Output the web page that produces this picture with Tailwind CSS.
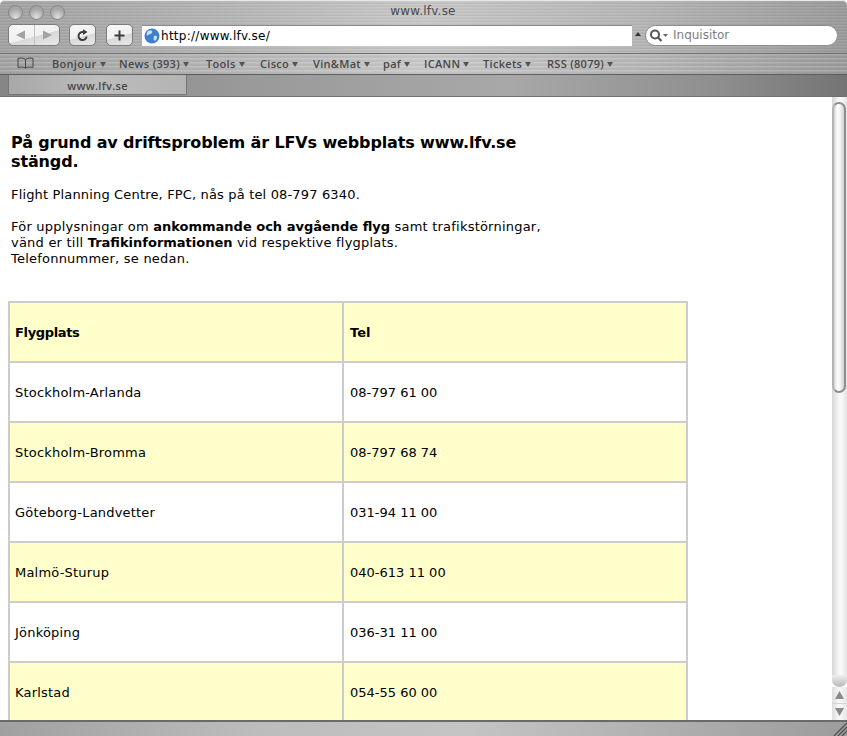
<!DOCTYPE html>
<html lang="sv">
<head>
<meta charset="utf-8">
<title>www.lfv.se</title>
<script src="https://cdn.jsdelivr.net/npm/@tailwindcss/browser@4"></script>
</head>
<body class="w-[847px] h-[736px] overflow-hidden bg-white font-['DejaVu_Sans',sans-serif] text-black flex flex-col">
<!-- metal chrome -->
<header class="h-[97px] shrink-0 flex flex-col bg-[linear-gradient(90deg,#a2a2a2_0%,#b4b4b4_25%,#c8c8c8_50%,#b6b6b6_75%,#9a9a9a_100%)] relative rounded-t-[5px]">
  <!-- title bar + toolbar -->
  <div class="h-[54px] shrink-0 border-b border-[#6e6e6e] flex flex-col border-t border-t-[#e8e8e8] rounded-t-[5px] bg-[repeating-linear-gradient(180deg,#ffffff14_0px,#ffffff14_1px,#0000000a_2px,#0000000a_3px)]">
    <div class="h-[23px] shrink-0 relative flex items-center justify-center">
      <div class="absolute left-[8px] top-[4px] flex gap-[6px]">
        <span class="w-[15px] h-[15px] rounded-full border border-[#858585] bg-[radial-gradient(circle_at_50%_85%,#dedede,#a6a6a6_65%)]"></span>
        <span class="w-[15px] h-[15px] rounded-full border border-[#858585] bg-[radial-gradient(circle_at_50%_85%,#dedede,#a6a6a6_65%)]"></span>
        <span class="w-[15px] h-[15px] rounded-full border border-[#858585] bg-[radial-gradient(circle_at_50%_85%,#dedede,#a6a6a6_65%)]"></span>
      </div>
      <span class="text-[12px] leading-none text-[#4c4c4c] pb-[4px] -ml-[1px] tracking-[0.2px]">www.lfv.se</span>
    </div>
    <div class="flex items-center h-[24px] pl-[8px] pr-[8px] -mt-[1px]">
      <div class="w-[52px] h-[22px] rounded-[5px] border border-[#7c7c7c] bg-[linear-gradient(165deg,#f8f8f8,#f0f0f0_55%,#d8d8d8_56%,#e8e8e8)] flex items-center">
        <span class="flex-1 h-full flex items-center justify-center border-r border-[#c4c4c4]"><svg width="12" height="10" viewBox="0 0 12 10"><path d="M1 5 L10 0.5 V9.5 Z" fill="#a2a2a2"/></svg></span>
        <span class="flex-1 h-full flex items-center justify-center"><svg width="12" height="10" viewBox="0 0 12 10"><path d="M11 5 L2 0.5 V9.5 Z" fill="#a2a2a2"/></svg></span>
      </div>
      <div class="ml-[9px] w-[27px] h-[22px] rounded-[5px] border border-[#7c7c7c] bg-[linear-gradient(165deg,#f8f8f8,#f0f0f0_55%,#d8d8d8_56%,#e8e8e8)] flex items-center justify-center">
        <svg width="12" height="13" viewBox="0 0 12 13"><path d="M9.5 7.5 A4 4 0 1 1 6.5 3.2" fill="none" stroke="#3c3c3c" stroke-width="2"/><path d="M6 0.3 L10.5 3 L6 6 Z" fill="#3c3c3c"/></svg>
      </div>
      <div class="ml-[10px] w-[27px] h-[22px] rounded-[5px] border border-[#7c7c7c] bg-[linear-gradient(165deg,#f8f8f8,#f0f0f0_55%,#d8d8d8_56%,#e8e8e8)] flex items-center justify-center">
        <svg width="11" height="11" viewBox="0 0 11 11"><path d="M5.5 0.5 V10.5 M0.5 5.5 H10.5" stroke="#3c3c3c" stroke-width="2"/></svg>
      </div>
      <div class="ml-[9px] w-[490px] h-[21px] bg-white border-t border-[#8c8c8c] flex items-center pl-[2px]">
        <svg width="16" height="16" viewBox="0 0 16 16" class="shrink-0"><circle cx="8" cy="8" r="7.5" fill="#3f7fd0"/><path d="M4 3 C7 1 9 3 8 5 C6 7 4 6 3 8 C2 6 3 4 4 3 Z M10 8 C13 7 14 9 12 12 C10 14 9 11 10 8 Z" fill="#cfe0f4"/></svg>
        <span class="ml-[1px] text-[12px] leading-none tracking-[0.27px]">http://www.lfv.se/</span>
      </div>
      <svg width="6" height="4" viewBox="0 0 6 4" class="ml-[3px] mr-[1px] -mt-[2px]"><path d="M3 0 L6 4 H0 Z" fill="#333"/></svg>
      <div class="ml-[3px] w-[193px] h-[21px] rounded-full bg-white border border-[#8c8c8c] flex items-center pl-[3px]">
        <svg width="20" height="13" viewBox="0 0 20 13"><circle cx="6" cy="5.5" r="4" fill="none" stroke="#555" stroke-width="2"/><path d="M9 8.5 L12.5 12" stroke="#555" stroke-width="2.2"/><path d="M14 5 H19 L16.5 8 Z" fill="#666"/></svg>
        <span class="ml-[4px] text-[12px] leading-none text-[#7e7e7e]">Inquisitor</span>
      </div>
    </div>
  </div>
  <!-- bookmarks -->
  <nav class="h-[21px] shrink-0 border-b border-[#5e5e5e] flex items-center pl-[17px] pb-[2px] text-[11px] leading-none font-semibold text-[#484848] font-['Open_Sans','Lato',sans-serif] tracking-[0.3px] bg-[repeating-linear-gradient(180deg,#ffffff28_0px,#ffffff28_1px,#00000006_2px,#00000006_4px)]">
    <svg width="17" height="12" viewBox="0 0 17 12" class="mr-[18px]"><path d="M8.5 2.5 C6.5 0.8 3.5 0.8 1 1.5 V10.5 C3.5 9.8 6.5 9.8 8.5 11 C10.5 9.8 13.5 9.8 16 10.5 V1.5 C13.5 0.8 10.5 0.8 8.5 2.5 Z M8.5 2.5 V11" fill="none" stroke="#444" stroke-width="1"/></svg>
    <span class="flex items-center gap-[3px] w-[67px]">Bonjour<i class="block mt-[2px] border-x-[3px] border-x-transparent border-t-[5px] border-t-[#555]"></i></span>
    <span class="flex items-center gap-[3px] w-[87px]">News (393)<i class="block mt-[2px] border-x-[3px] border-x-transparent border-t-[5px] border-t-[#555]"></i></span>
    <span class="flex items-center gap-[3px] w-[54px]">Tools<i class="block mt-[2px] border-x-[3px] border-x-transparent border-t-[5px] border-t-[#555]"></i></span>
    <span class="flex items-center gap-[3px] w-[53px]">Cisco<i class="block mt-[2px] border-x-[3px] border-x-transparent border-t-[5px] border-t-[#555]"></i></span>
    <span class="flex items-center gap-[3px] w-[70px]">Vin&amp;Mat<i class="block mt-[2px] border-x-[3px] border-x-transparent border-t-[5px] border-t-[#555]"></i></span>
    <span class="flex items-center gap-[3px] w-[41px]">paf<i class="block mt-[2px] border-x-[3px] border-x-transparent border-t-[5px] border-t-[#555]"></i></span>
    <span class="flex items-center gap-[3px] w-[59px]">ICANN<i class="block mt-[2px] border-x-[3px] border-x-transparent border-t-[5px] border-t-[#555]"></i></span>
    <span class="flex items-center gap-[3px] w-[64px]">Tickets<i class="block mt-[2px] border-x-[3px] border-x-transparent border-t-[5px] border-t-[#555]"></i></span>
    <span class="flex items-center gap-[3px]">RSS (8079)<i class="block mt-[2px] border-x-[3px] border-x-transparent border-t-[5px] border-t-[#555]"></i></span>
  </nav>
  <!-- tab strip -->
  <div class="flex-1 flex border-b border-[#707070] bg-[linear-gradient(90deg,#868686,#9a9a9a_30%,#a8a8a8_60%,#8e8e8e_85%,#747474)]">
    <div class="ml-[8px] w-[179px] h-[20px] rounded-b-[2px] border-x border-b border-[#767676] bg-[linear-gradient(90deg,#a8a8a8,#bcbcbc_50%,#b4b4b4)] flex items-center justify-center pt-[2px]">
      <span class="text-[11px] leading-none font-semibold text-[#484848] font-['Open_Sans','Lato',sans-serif] tracking-[0.3px]">www.lfv.se</span>
    </div>
  </div>
</header>

<!-- page + scrollbar -->
<div class="flex-1 min-h-0 flex">
  <main class="flex-1 min-w-0 overflow-hidden pl-[8px] pt-[36px]">
    <div class="pl-[3px] w-[560px]">
      <h1 class="text-[16px] leading-[19px] font-bold tracking-[-0.13px]">På grund av driftsproblem är LFVs webbplats www.lfv.se stängd.</h1>
      <p class="mt-[16px] text-[13px] leading-[16px] tracking-[0.16px]">Flight Planning Centre, FPC, nås på tel 08-797 6340.</p>
      <p class="mt-[16px] text-[13px] leading-[16px] tracking-[0.22px]">För upplysningar om <b class="tracking-normal">ankommande och avgående flyg</b> samt trafikstörningar,<br>vänd er till <b class="tracking-normal">Trafikinformationen</b> vid respektive flygplats.<br>Telefonnummer, se nedan.</p>
    </div>
    <table class="mt-[34px] w-[680px] border-collapse text-[13px] table-fixed">
      <colgroup><col class="w-[334px]"><col></colgroup>
      <tbody>
        <tr class="h-[60px] bg-[#ffffcc] font-bold"><td class="border-2 border-[#cccccc] pl-[5px] pt-[2px] tracking-[-0.35px]">Flygplats</td><td class="border-2 border-[#cccccc] pl-[6px] pt-[2px]">Tel</td></tr>
        <tr class="h-[60px]"><td class="border-2 border-[#cccccc] pl-[5px] pt-[2px] tracking-[0.2px]">Stockholm-Arlanda</td><td class="border-2 border-[#cccccc] pl-[6px] pt-[2px]">08-797 61 00</td></tr>
        <tr class="h-[60px] bg-[#ffffcc]"><td class="border-2 border-[#cccccc] pl-[5px] pt-[2px] tracking-[0.2px]">Stockholm-Bromma</td><td class="border-2 border-[#cccccc] pl-[6px] pt-[2px]">08-797 68 74</td></tr>
        <tr class="h-[60px]"><td class="border-2 border-[#cccccc] pl-[5px] pt-[2px] tracking-[0.2px]">Göteborg-Landvetter</td><td class="border-2 border-[#cccccc] pl-[6px] pt-[2px]">031-94 11 00</td></tr>
        <tr class="h-[60px] bg-[#ffffcc]"><td class="border-2 border-[#cccccc] pl-[5px] pt-[2px] tracking-[0.2px]">Malmö-Sturup</td><td class="border-2 border-[#cccccc] pl-[6px] pt-[2px]">040-613 11 00</td></tr>
        <tr class="h-[60px]"><td class="border-2 border-[#cccccc] pl-[5px] pt-[2px] tracking-[0.2px]">Jönköping</td><td class="border-2 border-[#cccccc] pl-[6px] pt-[2px]">036-31 11 00</td></tr>
        <tr class="h-[60px] bg-[#ffffcc]"><td class="border-2 border-[#cccccc] pl-[5px] pt-[2px] tracking-[0.2px]">Karlstad</td><td class="border-2 border-[#cccccc] pl-[6px] pt-[2px]">054-55 60 00</td></tr>
      </tbody>
    </table>
  </main>
  <aside class="w-[15px] shrink-0 flex flex-col">
    <div class="flex-1 min-h-0 pt-[5px] rounded-b-[7px] bg-[linear-gradient(90deg,#d6d6d6,#f6f6f6_45%,#fafafa_60%,#e4e4e4)] relative overflow-hidden">
      <div class="h-[291px] w-[14px] rounded-full border-2 border-[#8e8e8e] border-l-[#b4b4b4] bg-[linear-gradient(90deg,#d4d4d4,#ffffff_35%,#f4f4f4_60%,#d0d0d0)]"></div>
      <div class="absolute bottom-0 left-0 right-0 h-[12px] rounded-b-[7px] bg-[linear-gradient(180deg,#efefef,#b8b8b8)]"></div>
    </div>
    <div class="h-[33px] shrink-0 flex flex-col bg-[linear-gradient(90deg,#dedede,#f8f8f8_50%,#e6e6e6)]">
      <span class="flex-1 flex items-center justify-center border-b border-[#d4d4d4]"><svg width="9" height="8" viewBox="0 0 9 8"><path d="M4.5 0 L9 8 H0 Z" fill="#8a8a8a"/></svg></span>
      <span class="flex-1 flex items-center justify-center"><svg width="9" height="8" viewBox="0 0 9 8"><path d="M4.5 8 L9 0 H0 Z" fill="#8a8a8a"/></svg></span>
    </div>
  </aside>
</div>

<!-- bottom bar -->
<footer class="h-[16px] shrink-0 border-t-2 border-[#6a6a6a] bg-[linear-gradient(90deg,#a0a0a0,#bcbcbc_30%,#c4c4c4_55%,#aeaeae_80%,#9c9c9c)] flex justify-end items-end">
  <svg width="14" height="14" viewBox="0 0 14 14"><path d="M1 14 L14 1 M5 14 L14 5 M9 14 L14 9" stroke="#4c4c4c" stroke-width="1.2"/></svg>
</footer>
</body>
</html>
